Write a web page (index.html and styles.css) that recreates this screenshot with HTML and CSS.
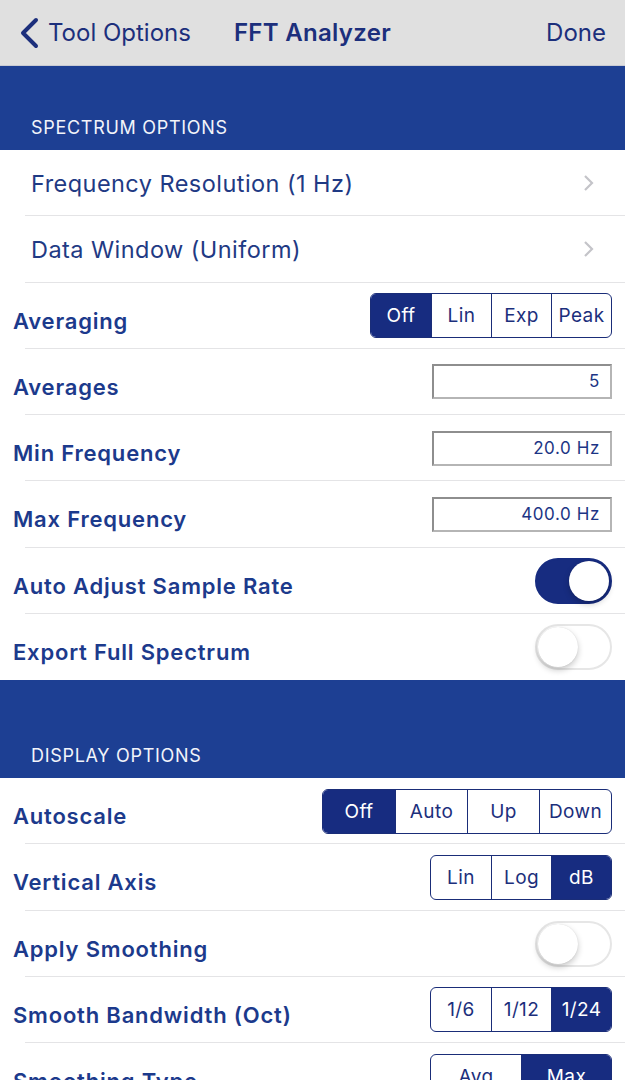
FILE: index.html
```html
<!DOCTYPE html>
<html lang="en">
<head>
    <meta charset="UTF-8">
    <meta name="viewport" content="width=device-width, initial-scale=1.0">
    <title>FFT Analyzer</title>
    <link rel="stylesheet" href="styles.css">
</head>
<body>
    <div class="navbar">
        <div class="nav-back">
            <svg class="back-icon" width="22" height="32" viewBox="0 0 22 32">
                <polyline points="18,3 5,16 18,29" fill="none" stroke="#1c2f7c" stroke-width="4" stroke-linecap="round" stroke-linejoin="round"/>
            </svg>
            <span>Tool Options</span>
        </div>
        <div class="nav-title">FFT Analyzer</div>
        <div class="nav-done">Done</div>
    </div>

    <div class="section-header first">SPECTRUM OPTIONS</div>
    <div class="row">
        <span class="item">Frequency Resolution (1 Hz)</span>
        <svg class="chevron" width="12" height="18" viewBox="0 0 12 18"><polyline points="2,2 9,9 2,16" fill="none" stroke="#c4c4c9" stroke-width="2.2"/></svg>
    </div>
    <div class="row">
        <span class="item">Data Window (Uniform)</span>
        <svg class="chevron" width="12" height="18" viewBox="0 0 12 18"><polyline points="2,2 9,9 2,16" fill="none" stroke="#c4c4c9" stroke-width="2.2"/></svg>
    </div>
    <div class="row">
        <span class="label">Averaging</span>
        <div class="segmented seg-60">
            <span class="seg on">Off</span><span class="seg">Lin</span><span class="seg">Exp</span><span class="seg">Peak</span>
        </div>
    </div>
    <div class="row">
        <span class="label">Averages</span>
        <div class="field">5</div>
    </div>
    <div class="row">
        <span class="label">Min Frequency</span>
        <div class="field">20.0 Hz</div>
    </div>
    <div class="row">
        <span class="label">Max Frequency</span>
        <div class="field">400.0 Hz</div>
    </div>
    <div class="row">
        <span class="label">Auto Adjust Sample Rate</span>
        <div class="toggle on"><span class="knob"></span></div>
    </div>
    <div class="row last">
        <span class="label">Export Full Spectrum</span>
        <div class="toggle"><span class="knob"></span></div>
    </div>

    <div class="section-header second">DISPLAY OPTIONS</div>
    <div class="row">
        <span class="label">Autoscale</span>
        <div class="segmented seg-72">
            <span class="seg on">Off</span><span class="seg">Auto</span><span class="seg">Up</span><span class="seg">Down</span>
        </div>
    </div>
    <div class="row">
        <span class="label">Vertical Axis</span>
        <div class="segmented seg-60">
            <span class="seg">Lin</span><span class="seg">Log</span><span class="seg on">dB</span>
        </div>
    </div>
    <div class="row">
        <span class="label">Apply Smoothing</span>
        <div class="toggle"><span class="knob"></span></div>
    </div>
    <div class="row">
        <span class="label">Smooth Bandwidth (Oct)</span>
        <div class="segmented seg-60">
            <span class="seg">1/6</span><span class="seg">1/12</span><span class="seg on">1/24</span>
        </div>
    </div>
    <div class="row">
        <span class="label">Smoothing Type</span>
        <div class="segmented seg-90">
            <span class="seg">Avg</span><span class="seg on">Max</span>
        </div>
    </div>
</body>
</html>
```

FILE: styles.css
```css
body {
    margin: 0;
    font-family: Inter, Roboto, sans-serif;
    background-color: #fff;
    color: #1c3585;
    overflow: hidden;
}
.navbar {
    height: 66px;
    box-sizing: border-box;
    background-color: #e0e0e0;
    border-bottom: 1px solid #c9cbd3;
    display: flex;
    align-items: center;
    padding: 0 19px 0 18px;
    font-size: 24px;
    color: #1c2f7c;
}
.nav-back {
    display: flex;
    align-items: center;
    gap: 8px;
}
.back-icon {
    display: block;
}
.nav-title {
    font-weight: 600;
    margin-left: 43px;
    letter-spacing: 0.3px;
}
.nav-done {
    margin-left: auto;
}
.section-header {
    background-color: #1d3f93;
    color: #f2f4fa;
    font-size: 18px;
    letter-spacing: 0.7px;
    padding: 0 31px 12px;
    box-sizing: border-box;
    display: flex;
    align-items: flex-end;
}
.section-header.first {
    height: 84px;
}
.section-header.second {
    height: 98px;
}
.row {
    height: 66.25px;
    box-sizing: border-box;
    display: flex;
    align-items: center;
    justify-content: space-between;
    padding: 0 13px;
    background: linear-gradient(#e4e4e6, #e4e4e6) no-repeat 25px 100% / calc(100% - 25px) 1px;
}
.row.last {
    background: none;
}
.item {
    font-size: 23.5px;
    letter-spacing: 0.45px;
    margin-left: 18px;
    color: #1f3a84;
}
.chevron {
    margin-right: 17px;
}
.label {
    font-size: 22px;
    letter-spacing: 0.8px;
    font-weight: 600;
    color: #1c3a8c;
    margin-top: 10px;
}
.segmented {
    display: flex;
    height: 45px;
    border: 1.5px solid #1a2d78;
    border-radius: 6px;
    overflow: hidden;
    box-sizing: border-box;
}
.seg {
    display: flex;
    align-items: center;
    justify-content: center;
    font-size: 19px;
    letter-spacing: 0.4px;
    color: #1c2f7c;
    border-left: 1.5px solid #1a2d78;
    box-sizing: border-box;
}
.seg:first-child {
    border-left: none;
}
.seg.on {
    background-color: #172c80;
    color: #fff;
}
.seg-60 .seg {
    width: 60px;
}
.seg-72 .seg {
    width: 72px;
}
.seg-90 .seg {
    width: 90px;
}
.field {
    width: 180px;
    height: 35px;
    box-sizing: border-box;
    border: 2px solid #8e8e8e;
    border-right-color: #b5b5b5;
    border-bottom-color: #b5b5b5;
    font-size: 17px;
    letter-spacing: 0.6px;
    color: #1c3585;
    text-align: right;
    padding: 0 10px;
    line-height: 31px;
}
.toggle {
    width: 77px;
    height: 46px;
    border-radius: 23px;
    box-sizing: border-box;
    border: 2px solid #e6e6e6;
    background-color: #fff;
    display: flex;
    align-items: center;
    padding: 0 1px;
}
.toggle .knob {
    width: 40px;
    height: 40px;
    border-radius: 50%;
    background-color: #fff;
    box-shadow: 0 3px 6px rgba(0, 0, 0, 0.22), 0 0 1px rgba(0, 0, 0, 0.15);
}
.toggle.on {
    background-color: #172c80;
    border-color: #172c80;
    justify-content: flex-end;
}
```
